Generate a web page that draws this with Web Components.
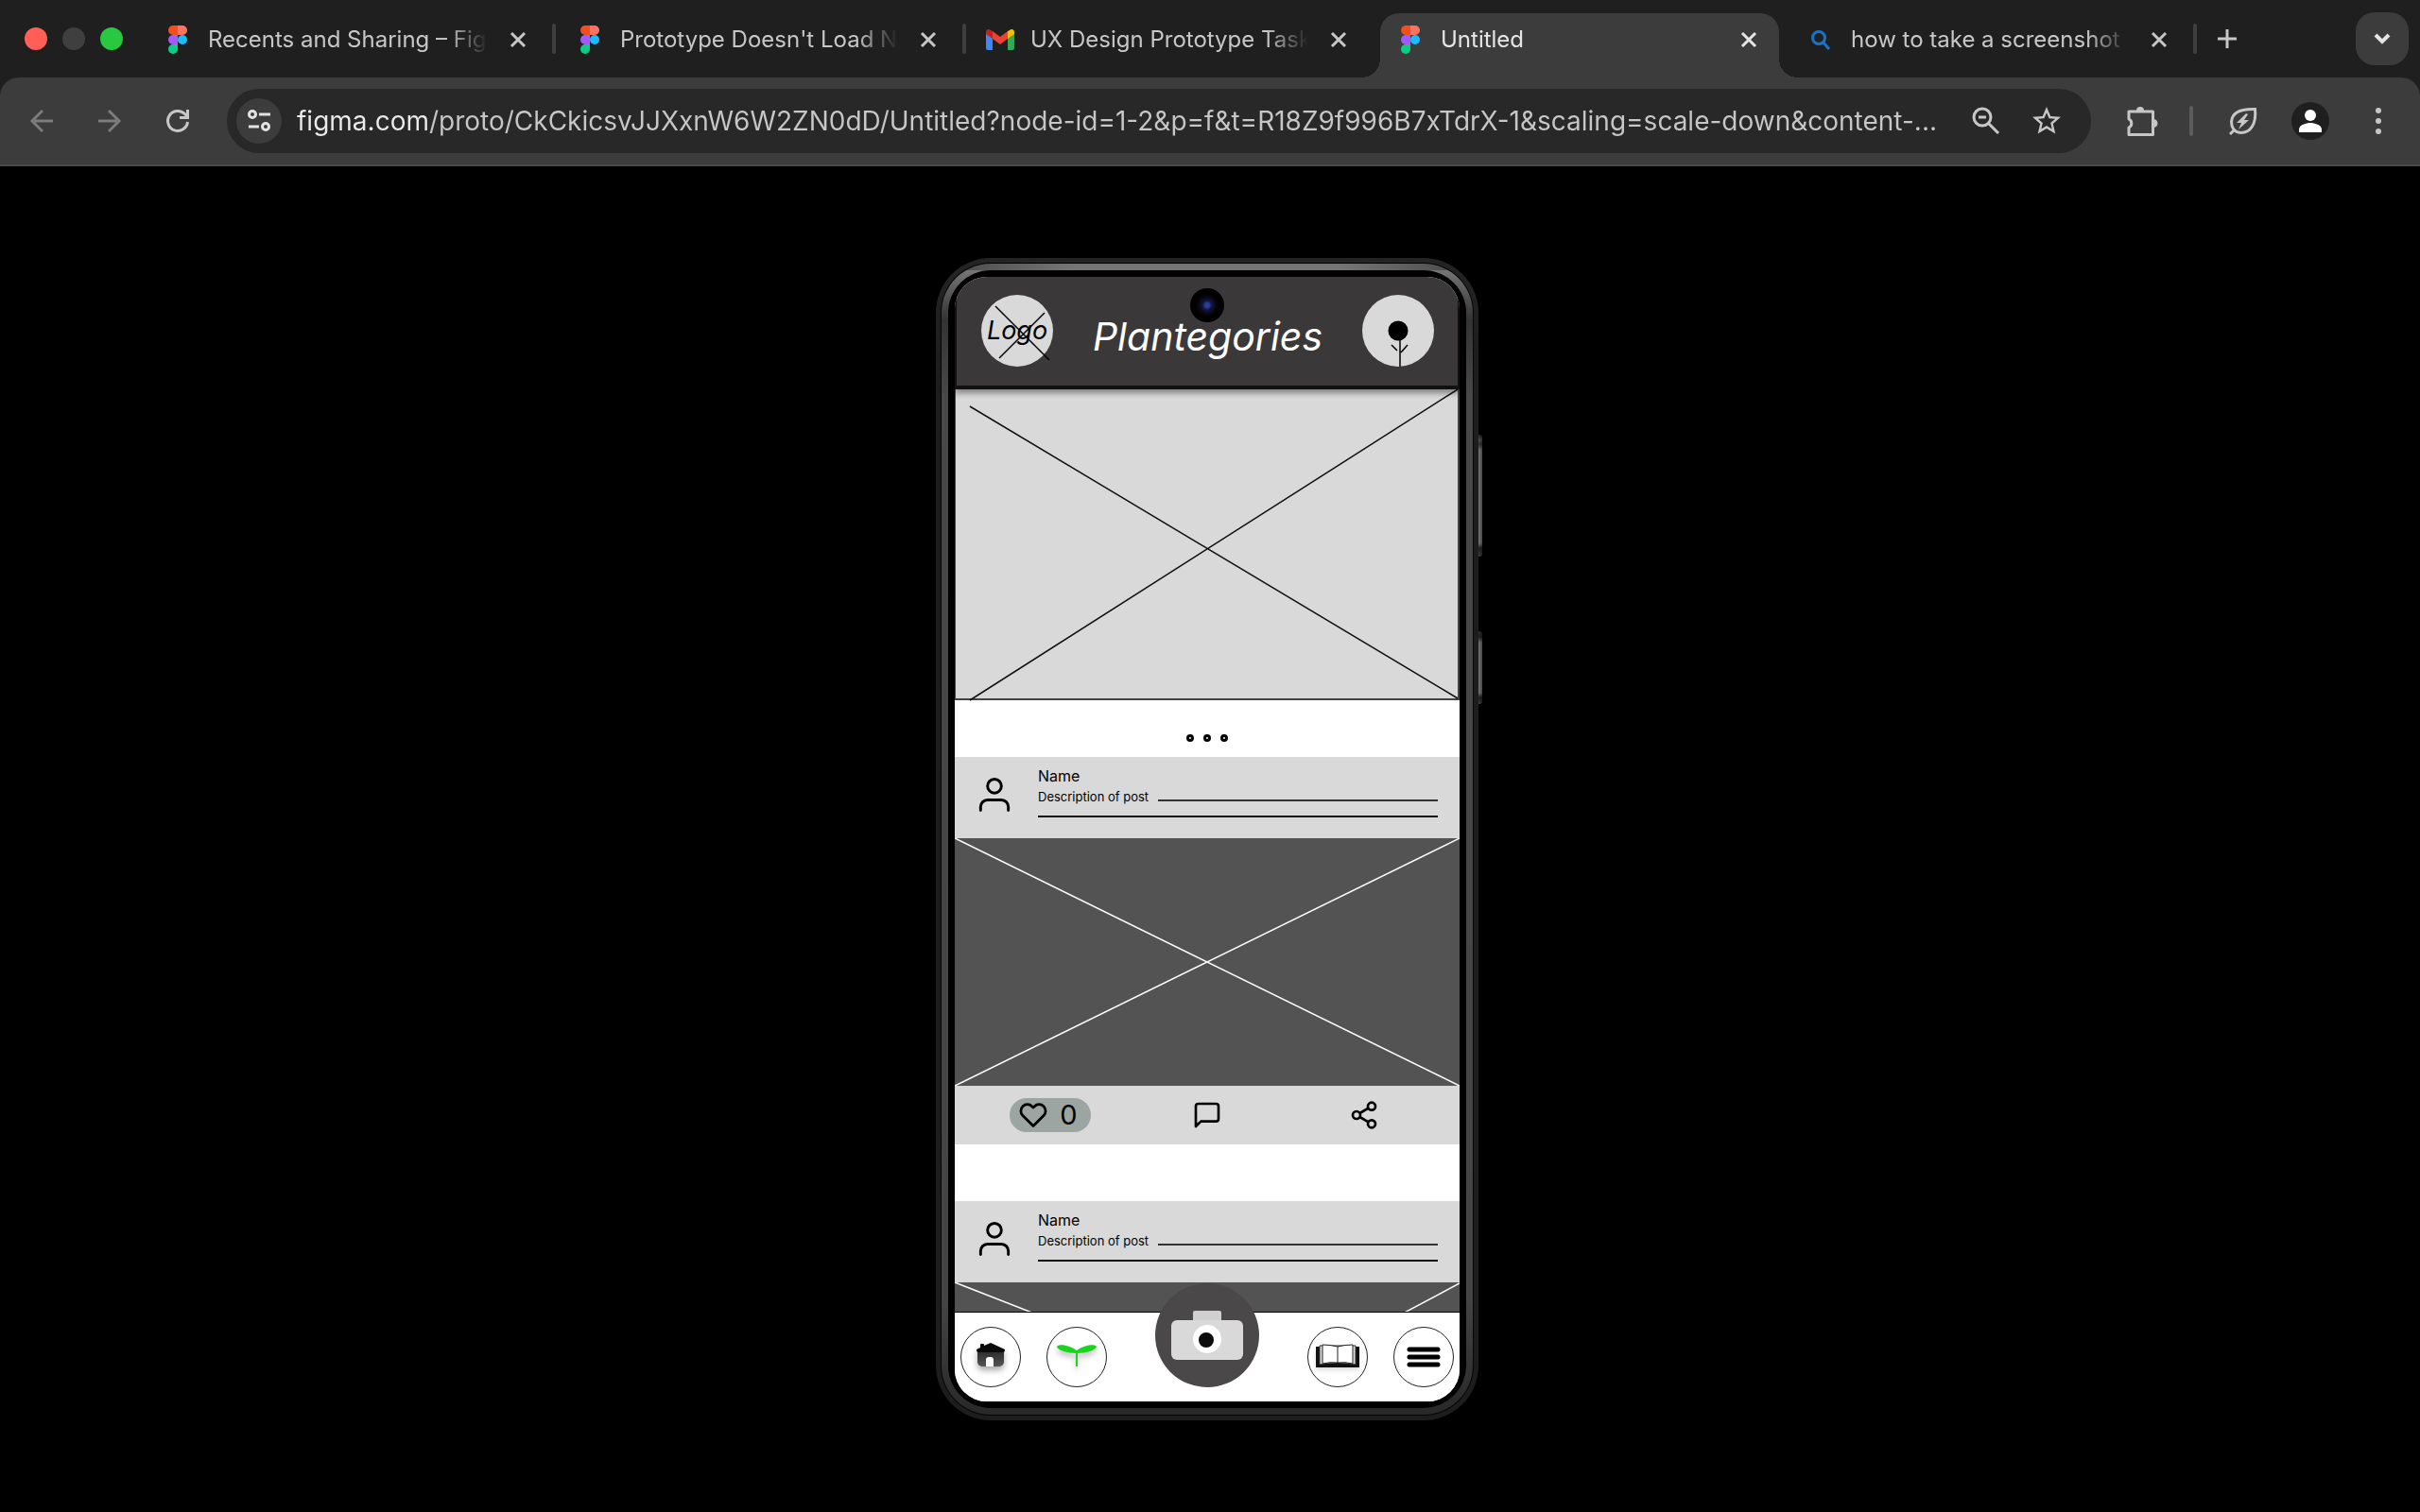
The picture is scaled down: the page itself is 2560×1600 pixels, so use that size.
<!DOCTYPE html>
<html lang="en">
<head>
<meta charset="utf-8">
<meta name="viewport" content="width=device-width, initial-scale=1">
<title>Untitled</title>
<style>
  html, body { height: 100%; margin: 0; background: #000; }
  body { font-family: Inter, "Liberation Sans", sans-serif; }
</style>
</head>
<body>

<browser-window>
  <browser-tab slot="tabs" icon="figma">Recents and Sharing – Figma</browser-tab>
  <browser-tab slot="tabs" icon="figma">Prototype Doesn't Load New</browser-tab>
  <browser-tab slot="tabs" icon="gmail">UX Design Prototype Task - </browser-tab>
  <browser-tab slot="tabs" icon="figma" active>Untitled</browser-tab>
  <browser-tab slot="tabs" icon="lens">how to take a screenshot on</browser-tab>
  <address-bar slot="toolbar" url="figma.com/proto/CkCkicsvJJXxnW6W2ZN0dD/Untitled?node-id=1-2&amp;p=f&amp;t=R18Z9f996B7xTdrX-1&amp;scaling=scale-down&amp;content-..."></address-bar>

  <phone-frame>
    <app-header slot="header">Plantegories</app-header>
    <hero-banner></hero-banner>
    <feed-post name="Name" description="Description of post" likes="0"></feed-post>
    <feed-post name="Name" description="Description of post"></feed-post>
    <app-nav slot="nav"></app-nav>
  </phone-frame>
</browser-window>

<script>
// ============================================================
// <ui-icon name="...">
// Every line icon and logo of the page, drawn as inline SVG.
// ============================================================
const ICONS = {
  figma: `<svg viewBox="0 0 20 30">
    <path fill="#f24e1e" d="M5 0h5v10H5A5 5 0 0 1 5 0z"/>
    <path fill="#ff7262" d="M10 0h5a5 5 0 0 1 0 10h-5z"/>
    <path fill="#a259ff" d="M5 10h5v10H5a5 5 0 0 1 0-10z"/>
    <circle fill="#1abcfe" cx="15" cy="15" r="5"/>
    <path fill="#0acf83" d="M5 20h5v5a5 5 0 1 1-5-5z"/></svg>`,
  gmail: `<svg viewBox="0 0 30 22">
    <path fill="#4285f4" d="M0 4l7 5v13H2a2 2 0 0 1-2-2z"/>
    <path fill="#34a853" d="M30 4l-7 5v13h5a2 2 0 0 0 2-2z"/>
    <path fill="#ea4335" d="M7 2l8 6 8-6v8l-8 6-8-6z"/>
    <path fill="#c5221f" d="M0 3c0-3 3-4 5-2l2 1v8L0 5z"/>
    <path fill="#fbbc04" d="M30 3c0-3-3-4-5-2l-2 1v8l7-5z"/></svg>`,
  lens: `<svg viewBox="0 0 20 20" fill="none" stroke="#1a73c7" stroke-width="3">
    <circle cx="8" cy="8" r="6.500"/><path d="M12 12l7 8"/></svg>`,
  close: `<svg viewBox="0 0 16 16" fill="none" stroke="currentColor" stroke-width="3"><path d="M1 1l14 14M15 1L1 15"/></svg>`,
  plus: `<svg viewBox="0 0 20 20" fill="none" stroke="currentColor" stroke-width="3"><path d="M10 0v20M0 10h20"/></svg>`,
  chevron: `<svg viewBox="0 0 18 12" fill="none" stroke="currentColor" stroke-width="4"><path d="M2 2l7 7 7-7"/></svg>`,
  back: `<svg viewBox="0 0 24 24" fill="none" stroke="currentColor" stroke-width="3"><path d="M24 12H2M13 1L2 12l11 11"/></svg>`,
  forward: `<svg viewBox="0 0 24 24" fill="none" stroke="currentColor" stroke-width="3"><path d="M0 12h22M11 1l11 11-11 11"/></svg>`,
  reload: `<svg viewBox="0 0 24 24" fill="none" stroke="currentColor" stroke-width="3"><path d="M22.500 13a10.500 10.500 0 1 1-3-8.500L23 8"/><path d="M22.500 0v8.500H14"/></svg>`,
  tune: `<svg viewBox="0 0 24 24" fill="none" stroke="currentColor" stroke-width="3"><circle cx="5" cy="5" r="3.500"/><path d="M12 5h12M1 18h11"/><circle cx="19" cy="18" r="3.500"/></svg>`,
  zoomout: `<svg viewBox="0 0 30 30" fill="none" stroke="currentColor" stroke-width="3"><circle cx="11" cy="11" r="9"/><path d="M7 11h8M17 17l11 11"/></svg>`,
  star: `<svg viewBox="2 2 20 20" fill="currentColor"><path d="M22 9.240l-7.190-.620L12 2 9.190 8.630 2 9.240l5.460 4.730L5.820 21 12 17.270 18.180 21l-1.630-7.030zM12 15.400l-3.760 2.270 1-4.280-3.320-2.880 4.380-.380L12 6.100l1.710 4.040 4.380.380-3.320 2.880 1 4.280z"/></svg>`,
  puzzle: `<svg viewBox="0 0 32 32" fill="none" stroke="currentColor" stroke-width="3" stroke-linejoin="round"><path d="M2 6h25.500v24.500H2V23a5 5 0 0 0 0-9z"/><path fill="currentColor" stroke="none" d="M10 5a4 4 0 0 1 8 0zM28 14a4 4 0 0 1 0 9z"/></svg>`,
  leaf: `<svg viewBox="0 0 30 30" fill="none" stroke="currentColor" stroke-width="3"><path d="M1 29l4-4M27.500 2.500C12 2 3 6 2.500 16c0 6 3 11 10 11.500C23 27.500 29 18 27.500 2.500z"/><path stroke="none" fill="currentColor" d="M18 7L8 17h5l-3 7 11-10h-5l4-6z"/></svg>`,
  person: `<svg viewBox="0 0 24 24" fill="#fff"><circle cx="12" cy="6" r="6"/><path d="M0 24v-3c0-5 8-7 12-7s12 2 12 7v3z"/></svg>`,
  more: `<svg viewBox="0 0 6 28" fill="currentColor"><circle cx="3" cy="3" r="3"/><circle cx="3" cy="14" r="3"/><circle cx="3" cy="25" r="3"/></svg>`,
  user: `<svg viewBox="0 0 24 24" fill="none" stroke="currentColor" stroke-width="1.600" stroke-linecap="round"><circle cx="12" cy="7" r="4"/><path d="M20 21v-2a4 4 0 0 0-4-4H8a4 4 0 0 0-4 4v2"/></svg>`,
  heart: `<svg viewBox="0 0 24 24" fill="none" stroke="currentColor" stroke-width="2.200" stroke-linejoin="round"><path d="M20.840 4.610a5.500 5.500 0 0 0-7.780 0L12 5.670l-1.060-1.060a5.500 5.500 0 0 0-7.780 7.780L12 21.230l8.840-8.840a5.500 5.500 0 0 0 0-7.780z"/></svg>`,
  comment: `<svg viewBox="0 0 24 24" fill="none" stroke="currentColor" stroke-width="2" stroke-linejoin="round"><path d="M21 15a2 2 0 0 1-2 2H7l-4 4V5a2 2 0 0 1 2-2h14a2 2 0 0 1 2 2z"/></svg>`,
  share: `<svg viewBox="0 0 24 24" fill="none" stroke="currentColor" stroke-width="2"><circle cx="18" cy="5" r="3"/><circle cx="6" cy="12" r="3"/><circle cx="18" cy="19" r="3"/><path d="M8.590 13.510l6.830 3.980M15.410 6.510l-6.820 3.980"/></svg>`,
  flower: `<svg viewBox="0 0 76 76" fill="none" stroke="#000" stroke-width="1.500"><circle cx="38" cy="38" r="10.500" fill="#000" stroke="none"/><path d="M40 46v30M31 53l6 6M48 53l-7 8"/></svg>`,
  home: `<svg viewBox="0 0 64 64">
    <defs><linearGradient id="w" x1="0" y1="0" x2="0" y2="1"><stop offset="0" stop-color="#2c2c2c"/><stop offset="1" stop-color="#555"/></linearGradient></defs>
    <g style="filter: drop-shadow(0 4px 3px #0005)">
    <path fill="url(#w)" d="M18 26h28v11a5 5 0 0 1-5 5H23a5 5 0 0 1-5-5z"/>
    <path fill="#0a0a0a" d="M17 24l4-2v-3q0-1 1-1h2q1 0 1 1v1l7-3 15 7v1q0 2-2 2H19q-2 0-2-2z"/></g>
    <path fill="#fff" d="M27 42v-7q0-3 3-3h2q3 0 3 3v7z"/></svg>`,
  sprout: `<svg viewBox="0 0 64 64" fill="#1ad41f" style="filter: drop-shadow(0 4px 3px #0004)">
    <path d="M32 28c-10 0-20-3-21-7 2-4 15-1 21 4 6-5 19-8 21-4-1 4-11 7-21 7z"/><path d="M31 26h2v16h-2z"/></svg>`,
  book: `<svg viewBox="0 0 64 64" style="filter: drop-shadow(0 3px 2px #0002)">
    <path fill="#111" d="M9 21h5v21H9zM50 21h5v21h-5zM12 39h40v4H9z"/>
    <path fill="#ddd" stroke="#333" d="M13 20h38v20q-10-2-19 0-9-2-19 0z"/>
    <path fill="#111" d="M9 43v-3h7q16-4 32 0h7v3z"/>
    <path fill="#fff" stroke="#222" d="M16 19q8 0 16 2 8-2 16-2v20q-8-2-16-1-8-1-16 1z"/>
    <path fill="none" stroke="#222" d="M32 21v17"/></svg>`,
  menu: `<svg viewBox="0 0 64 64" fill="none" stroke="#000" stroke-width="5" stroke-linecap="round"><path d="M17 24h30M17 32h30M17 40h30"/></svg>`,
  camera: `<svg viewBox="0 0 110 110">
    <rect x="40" y="29" width="30" height="13" rx="2" fill="#d0d0d0"/>
    <rect x="17" y="39" width="76" height="42" rx="6" fill="#d9d9d9"/>
    <circle cx="55" cy="59" r="15" fill="#fff"/><circle cx="54" cy="60" r="8" fill="#0b0b0b"/></svg>`,
};

class UiIcon extends HTMLElement {
  constructor() {
    super();
    this.attachShadow({ mode: 'open' });
  }

  connectedCallback() {
    this.shadowRoot.innerHTML = `
      <style>
        :host { display: block; flex: none; }
        svg { display: block; width: 100%; height: 100%; overflow: visible; }
      </style>
      ${ICONS[this.getAttribute('name')] || ''}
    `;
  }
}
customElements.define('ui-icon', UiIcon);


// ============================================================
// <browser-tab icon="..." active>
// One tab of the strip; the title is the slotted text.
// ============================================================
class BrowserTab extends HTMLElement {
  constructor() {
    super();
    this.attachShadow({ mode: 'open' });
  }

  connectedCallback() {
    const icon = this.getAttribute('icon');
    this.shadowRoot.innerHTML = `
      <style>
        :host { display: flex; flex: 0 1 434px; min-width: 0; align-items: center; color: #c7c7c7; }
        :host(:first-child) { flex-basis: 436px; }
        .tab {
          display: flex;
          flex: 1;
          min-width: 0;
          align-items: center;
          height: 68px;
          margin: 14px 4px 0;
          padding: 0 24px 12px 16px;
          box-sizing: border-box;
        }
        :host([active]) .tab {
          position: relative;
          background: #3c3c3c;
          border-radius: 20px 20px 0 0;
          color: #e6e6e6;
        }
        /* curved feet of the active tab */
        :host([active]) .tab::before, :host([active]) .tab::after {
          content: "";
          position: absolute;
          bottom: 0;
          width: 20px;
          height: 20px;
        }
        :host([active]) .tab::before { right: 100%; background: radial-gradient(circle at 0 0, transparent 20px, #3c3c3c 20px); }
        :host([active]) .tab::after { left: 100%; background: radial-gradient(circle at 100% 0, transparent 20px, #3c3c3c 20px); }
        button { border: 0; padding: 0; background: none; color: inherit; font: inherit; text-align: left; }
        .title {
          display: flex;
          flex: 1;
          min-width: 0;
          align-items: center;
          gap: 16px;
          margin-right: 24px;
        }
        .favicon { display: flex; flex: none; width: 32px; justify-content: center; }
        .figma { width: 20px; height: 30px; }
        .gmail { width: 30px; height: 22px; }
        .lens { width: 20px; height: 20px; }
        .text {
          flex: 1;
          min-width: 0;
          overflow: hidden;
          white-space: nowrap;
          font-size: 24px;
          line-height: 32px;
          -webkit-mask-image: linear-gradient(to left, transparent, #000 44px);
          mask-image: linear-gradient(to left, transparent, #000 44px);
        }
        .close ui-icon { width: 16px; height: 16px; }
        .divider { flex: none; width: 4px; height: 32px; border-radius: 2px; background: #3f3f3f; }
        :host([active]) .divider, :host(.before-active) .divider { visibility: hidden; }
      </style>
      <div class="tab">
        <button class="title" type="button">
          <span class="favicon"><ui-icon class="${icon}" name="${icon}"></ui-icon></span>
          <span class="text"><slot></slot></span>
        </button>
        <button class="close" type="button" aria-label="Close tab"><ui-icon name="close"></ui-icon></button>
      </div>
      <span class="divider"></span>
    `;
    const next = this.nextElementSibling;
    this.classList.toggle('before-active', !!next && next.hasAttribute('active'));
  }
}
customElements.define('browser-tab', BrowserTab);


// ============================================================
// <address-bar url="...">
// The host part of the address is brighter than the rest.
// ============================================================
class AddressBar extends HTMLElement {
  constructor() {
    super();
    this.attachShadow({ mode: 'open' });
  }

  connectedCallback() {
    this.shadowRoot.innerHTML = `
      <style>
        :host {
          display: flex;
          flex: 1;
          min-width: 0;
          align-items: center;
          height: 68px;
          padding: 0 32px 0 10px;
          box-sizing: border-box;
          border-radius: 34px;
          background: #282828;
          color: #c7c7c7;
        }
        button { display: flex; align-items: center; justify-content: center; border: 0; padding: 0; background: none; color: inherit; }
        .site { flex: none; width: 48px; height: 48px; border-radius: 24px; background: #3c3c3c; color: #e3e3e3; }
        .site ui-icon { width: 24px; height: 24px; }
        input {
          flex: 1;
          min-width: 0;
          height: 40px;
          margin: 0 24px 0 16px;
          padding: 0;
          border: 0;
          outline: 0;
          font: 28px/40px Inter, "Liberation Sans", sans-serif;
          color: #c7c7c7;
          background: linear-gradient(to right, #ececec 138px, #c7c7c7 138px);
          -webkit-background-clip: text;
          background-clip: text;
          -webkit-text-fill-color: transparent;
        }
        .tools { display: flex; gap: 34px; }
        .tools ui-icon { width: 30px; height: 30px; }
      </style>
      <button class="site" type="button" aria-label="Site information"><ui-icon name="tune"></ui-icon></button>
      <input type="text" aria-label="Address" value="${this.getAttribute('url').replace(/&/g, '&amp;')}">
      <div class="tools">
        <button type="button" aria-label="Zoom"><ui-icon name="zoomout"></ui-icon></button>
        <button type="button" aria-label="Bookmark"><ui-icon name="star"></ui-icon></button>
      </div>
    `;
  }
}
customElements.define('address-bar', AddressBar);


// ============================================================
// <browser-window>
// Tab strip, toolbar and the page area below them.
// Slots: "tabs", "toolbar" and the default one for the page.
// ============================================================
class BrowserWindow extends HTMLElement {
  constructor() {
    super();
    this.attachShadow({ mode: 'open' });
  }

  connectedCallback() {
    this.shadowRoot.innerHTML = `
      <style>
        :host { display: flex; flex-direction: column; min-height: 100%; }
        .strip { display: flex; align-items: center; height: 82px; padding: 0 12px 0 26px; background: #1f1f1f; }
        .lights { display: flex; flex: none; gap: 16px; margin-right: 22px; }
        .lights button { width: 24px; height: 24px; border-radius: 12px; background: #3f3f3f; }
        .lights .red { background: #ff5f57; }
        .lights .green { background: #28c840; }
        .tabs { display: flex; flex: 0 1 2172px; min-width: 0; height: 82px; }
        button { display: flex; flex: none; align-items: center; justify-content: center; border: 0; padding: 0; background: none; color: #c7c7c7; }
        .new { margin-left: 22px; }
        .new ui-icon { width: 20px; height: 20px; }
        .search { width: 56px; height: 56px; margin-left: auto; border-radius: 20px; background: #3c3c3c; color: #e3e3e3; }
        .search ui-icon { width: 18px; height: 12px; }
        .back-plate { background: #1f1f1f; }
        .toolbar {
          display: flex;
          align-items: center;
          height: 94px;
          padding: 0 41px 0 32px;
          box-sizing: border-box;
          border-bottom: 2px solid #4a4a4a;
          border-radius: 20px 20px 0 0;
          background: #3c3c3c;
        }
        .history { display: flex; gap: 48px; margin-right: 40px; }
        .history ui-icon { width: 24px; height: 24px; }
        .history button:disabled { color: #7c7c7c; }
        .right { display: flex; align-items: center; margin-left: 38px; }
        .puzzle { width: 32px; height: 32px; }
        .divider { width: 4px; height: 32px; margin: 0 38px 0 34px; border-radius: 2px; background: #5c5c5c; }
        .leaf { width: 30px; height: 30px; }
        .avatar { width: 40px; height: 40px; margin: 0 49px 0 36px; border-radius: 20px; background: #1f1f1f; }
        .avatar ui-icon { width: 24px; height: 24px; }
        .more { width: 6px; height: 28px; }
        main { display: flex; flex: 1; align-items: center; justify-content: center; background: #000; }
      </style>
      <header>
        <div class="strip">
          <div class="lights">
            <button class="red" type="button" aria-label="Close"></button>
            <button type="button" aria-label="Minimise"></button>
            <button class="green" type="button" aria-label="Full screen"></button>
          </div>
          <div class="tabs"><slot name="tabs"></slot></div>
          <button class="new" type="button" aria-label="New tab"><ui-icon name="plus"></ui-icon></button>
          <button class="search" type="button" aria-label="Search tabs"><ui-icon name="chevron"></ui-icon></button>
        </div>
        <div class="back-plate">
          <div class="toolbar">
            <div class="history">
              <button type="button" aria-label="Back" disabled><ui-icon name="back"></ui-icon></button>
              <button type="button" aria-label="Forward" disabled><ui-icon name="forward"></ui-icon></button>
              <button type="button" aria-label="Reload"><ui-icon name="reload"></ui-icon></button>
            </div>
            <slot name="toolbar"></slot>
            <div class="right">
              <button type="button" aria-label="Extensions"><ui-icon class="puzzle" name="puzzle"></ui-icon></button>
              <span class="divider"></span>
              <button type="button" aria-label="Energy saver"><ui-icon class="leaf" name="leaf"></ui-icon></button>
              <button class="avatar" type="button" aria-label="Profile"><ui-icon name="person"></ui-icon></button>
              <button type="button" aria-label="Menu"><ui-icon class="more" name="more"></ui-icon></button>
            </div>
          </div>
        </div>
      </header>
      <main><slot></slot></main>
    `;
  }
}
customElements.define('browser-window', BrowserWindow);


// ============================================================
// <phone-frame>
// The device body. Slots: "header", default (feed), "nav".
// ============================================================
class PhoneFrame extends HTMLElement {
  constructor() {
    super();
    this.attachShadow({ mode: 'open' });
  }

  connectedCallback() {
    this.shadowRoot.innerHTML = `
      <style>
        :host { display: flex; }
        .rim { padding: 5px; border-radius: 58px; background: linear-gradient(#242424, #1d1d1d 10%, #1d1d1d); }
        .groove { padding: 1px; border-radius: 53px; background: #050505; }
        .band { padding: 7px; border-radius: 52px; background: linear-gradient(to right, #0006, #0000 25%, #0000 75%, #0006) 0 0 / 100% 7px no-repeat, linear-gradient(#757575 7px, #333 60px, #484848 140px, #444 90%, #282828); }
        .bezel { padding: 7px; border-radius: 45px; background: #000; }
        .screen {
          position: relative;
          display: flex;
          flex-direction: column;
          width: 534px;
          height: 1190px;
          border-radius: 34px;
          overflow: hidden;
          background: #fff;
        }
        .lens {
          position: absolute;
          top: 12px;
          left: 50%;
          width: 36px;
          height: 36px;
          margin-left: -18px;
          border-radius: 18px;
          background: radial-gradient(circle, #2a3f9a 0 2px, #10153f 5px, #0b0710 9px, #000 12px);
        }
        .feed { flex: 1; min-height: 0; overflow: hidden; }
        .keys { display: flex; flex-direction: column; gap: 79px; padding: 187px 2px 0 0; }
        .keys span { width: 4px; height: 129px; border-radius: 0 3px 3px 0; background: linear-gradient(to right, transparent, #0006), linear-gradient(#222, #555 6px, #333 10px, #777 16px, #777 115px, #222 120px, #444); }
        .keys span + span { height: 77px; background: linear-gradient(to right, transparent, #0006), linear-gradient(#333, #222 6px, #777 12px, #777 65px, #222 70px, #444); }
      </style>
      <div class="rim"><div class="groove"><div class="band"><div class="bezel">
        <div class="screen">
          <slot name="header"></slot>
          <div class="feed"><slot></slot></div>
          <slot name="nav"></slot>
          <span class="lens"></span>
        </div>
      </div></div></div></div>
      <div class="keys"><span></span><span></span></div>
    `;
  }
}
customElements.define('phone-frame', PhoneFrame);


// ============================================================
// <app-header>
// Logo, app name (slotted) and the profile flower.
// ============================================================
class AppHeader extends HTMLElement {
  constructor() {
    super();
    this.attachShadow({ mode: 'open' });
  }

  connectedCallback() {
    this.shadowRoot.innerHTML = `
      <style>
        :host {
          position: relative;
          display: flex;
          align-items: flex-start;
          justify-content: space-between;
          height: 119px;
          padding: 19px 25px 0 26px;
          box-sizing: border-box;
          border: solid #111;
          border-width: 0 2px 4px;
          background: #3b3839;
          box-shadow: 0 4px 6px #0006;
        }
        a, button { display: flex; align-items: center; justify-content: center; width: 76px; height: 76px; border: 0; padding: 0; border-radius: 38px; background: #d9d9d9; color: #000; }
        a {
          position: relative;
          font-size: 27px;
          line-height: 32px;
          font-style: italic;
          text-decoration: none;
        }
        a svg { position: absolute; inset: 0; overflow: visible; }
        h1 { margin: 19px 0 0; color: #fff; font-size: 41px; line-height: 50px; font-weight: 400; font-style: italic; }
        ui-icon { width: 76px; height: 76px; }
      </style>
      <a href="#home">Logo
        <svg width="76" height="76" viewBox="0 0 76 76" fill="none" stroke="#000" stroke-width="1.500" aria-hidden="true"><path d="M15 12l57 57M67 19L19 67"/></svg>
      </a>
      <h1><slot></slot></h1>
      <button type="button" aria-label="Profile"><ui-icon name="flower"></ui-icon></button>
    `;
  }
}
customElements.define('app-header', AppHeader);


// ============================================================
// <hero-banner>
// Large picture placeholder with its three page dots.
// ============================================================
class HeroBanner extends HTMLElement {
  constructor() {
    super();
    this.attachShadow({ mode: 'open' });
  }

  connectedCallback() {
    this.shadowRoot.innerHTML = `
      <style>
        :host { display: block; background: #fff; }
        .picture { height: 329px; box-sizing: border-box; border: solid #444; border-width: 0 2px 2px 1px; background: #d9d9d9; }
        svg { display: block; width: 100%; height: 100%; overflow: visible; }
        .dots { display: flex; justify-content: center; gap: 10px; height: 60px; padding-top: 36px; box-sizing: border-box; }
        button { width: 8px; height: 8px; padding: 0; box-sizing: border-box; border: 3px solid #000; border-radius: 4px; background: #fff; }
      </style>
      <div class="picture">
        <svg viewBox="0 0 533 327" preserveAspectRatio="none" stroke="#111" stroke-width="1.500" aria-hidden="true"><path d="M15 18L533 327M533 0L15 329"/></svg>
      </div>
      <div class="dots">
        <button type="button" aria-label="Slide 1"></button>
        <button type="button" aria-label="Slide 2"></button>
        <button type="button" aria-label="Slide 3"></button>
      </div>
    `;
  }
}
customElements.define('hero-banner', HeroBanner);


// ============================================================
// <feed-post name="..." description="..." likes="...">
// Without "likes" the post is a preview with no action row.
// ============================================================
class FeedPost extends HTMLElement {
  constructor() {
    super();
    this.attachShadow({ mode: 'open' });
  }

  connectedCallback() {
    const likes = this.getAttribute('likes');
    const cross = likes === null ? 'M0 0L534 209M534 1L0 285' : 'M0 0L534 262M534 0L0 262';

    const actions = likes === null ? '' : `
      <div class="actions">
        <button class="like" type="button" aria-label="Like"><ui-icon name="heart"></ui-icon><span>${likes}</span></button>
        <button type="button" aria-label="Comment"><ui-icon name="comment"></ui-icon></button>
        <button type="button" aria-label="Share"><ui-icon name="share"></ui-icon></button>
      </div>`;

    this.shadowRoot.innerHTML = `
      <style>
        :host { display: block; margin-bottom: 60px; color: #000; }
        .author { display: flex; height: 86px; padding: 9px 23px 0 20px; box-sizing: border-box; gap: 24px; background: #d9d9d9; }
        .author ui-icon { width: 44px; height: 44px; margin-top: 9px; }
        .body { flex: 1; min-width: 0; }
        h2 { margin: 0; font-size: 16px; line-height: 22px; font-weight: 400; }
        .description { display: flex; height: 18px; gap: 10px; font-size: 13px; line-height: 22px; }
        .line { flex: 1; height: 2px; align-self: flex-end; margin-bottom: 2px; background: #333; }
        .second { height: 2px; margin-top: 13px; background: #111; }
        .picture { height: 262px; background: #535353; }
        .picture svg { display: block; width: 100%; height: 100%; }
        .actions { display: grid; grid-template-columns: repeat(3, 166px); justify-content: center; justify-items: center; align-items: center; height: 62px; background: #d9d9d9; }
        button { display: flex; align-items: center; border: 0; padding: 0; background: none; color: inherit; font: inherit; }
        .actions ui-icon { width: 32px; height: 32px; }
        .like { height: 36px; padding: 0 14px 0 10px; gap: 13px; border-radius: 18px; background: #9ca5a2; font-size: 29px; line-height: 36px; }
        .like ui-icon { width: 30px; height: 30px; }
      </style>
      <article>
        <div class="author">
          <ui-icon name="user"></ui-icon>
          <div class="body">
            <h2>${this.getAttribute('name')}</h2>
            <div class="description"><span>${this.getAttribute('description')}</span><span class="line"></span></div>
            <div class="second"></div>
          </div>
        </div>
        <div class="picture">
          <svg viewBox="0 0 534 262" preserveAspectRatio="none" stroke="#fff" stroke-width="1.500" aria-hidden="true"><path d="${cross}"/></svg>
        </div>
        ${actions}
      </article>
    `;
  }
}
customElements.define('feed-post', FeedPost);


// ============================================================
// <app-nav>
// Bottom bar; the camera button rises over the feed.
// ============================================================
class AppNav extends HTMLElement {
  constructor() {
    super();
    this.attachShadow({ mode: 'open' });
  }

  connectedCallback() {
    this.shadowRoot.innerHTML = `
      <style>
        :host { position: relative; display: block; }
        nav { display: flex; align-items: center; justify-content: space-between; height: 95px; padding: 0 6px; box-sizing: border-box; border-top: 1px solid #000; background: #fff; }
        .group { display: flex; gap: 27px; }
        a { display: block; width: 64px; height: 64px; box-sizing: border-box; border: 1px solid #222; border-radius: 32px; }
        a ui-icon { width: 64px; height: 64px; margin: -1px; }
        button { display: block; flex: none; align-self: flex-end; width: 110px; height: 110px; margin: -31px 0 15px; border: 0; padding: 0; border-radius: 55px; background: #4b4849; }
        button ui-icon { width: 110px; height: 110px; }
      </style>
      <nav aria-label="Main">
        <div class="group">
          <a href="#home" aria-label="Home"><ui-icon name="home"></ui-icon></a>
          <a href="#plants" aria-label="Plants"><ui-icon name="sprout"></ui-icon></a>
        </div>
        <button type="button" aria-label="Camera"><ui-icon name="camera"></ui-icon></button>
        <div class="group">
          <a href="#guide" aria-label="Guide"><ui-icon name="book"></ui-icon></a>
          <a href="#menu" aria-label="Menu"><ui-icon name="menu"></ui-icon></a>
        </div>
      </nav>
    `;
  }
}
customElements.define('app-nav', AppNav);
</script>
</body>
</html>
